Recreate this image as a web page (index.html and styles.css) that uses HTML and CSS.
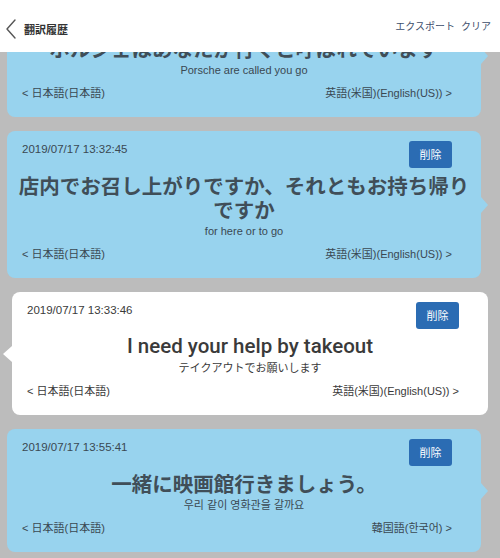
FILE: index.html
```html
<!DOCTYPE html>
<html lang="ja">
<head>
    <meta charset="UTF-8">
    <meta name="viewport" content="width=device-width, initial-scale=1.0">
    <title>翻訳履歴</title>
    <link rel="stylesheet" href="styles.css">
</head>
<body>
    <div class="header">
        <div class="back">
            <svg width="12" height="20" viewBox="0 0 12 20"><path d="M10 1 L2 10 L10 19" fill="none" stroke="#555" stroke-width="1.4" stroke-linecap="round" stroke-linejoin="round"/></svg>
            <span class="title">翻訳履歴</span>
        </div>
        <div class="actions">
            <span>エクスポート</span>
            <span>クリア</span>
        </div>
    </div>

    <div class="list">
        <!-- primera tarjeta: la parte de arriba queda bajo la cabecera -->
        <div class="card right">
            <div class="top"></div>
            <div class="main">ポルシェはあなたが行くと呼ばれています</div>
            <div class="sub">Porsche are called you go</div>
            <div class="langs">
                <span>&lt; 日本語(日本語)</span>
                <span>英語(米国)(English(US)) &gt;</span>
            </div>
        </div>

        <div class="card right">
            <div class="top">
                <span class="date">2019/07/17 13:32:45</span>
                <div class="button">削除</div>
            </div>
            <div class="main">店内でお召し上がりですか、それともお持ち帰りですか</div>
            <div class="sub">for here or to go</div>
            <div class="langs">
                <span>&lt; 日本語(日本語)</span>
                <span>英語(米国)(English(US)) &gt;</span>
            </div>
        </div>

        <div class="card left">
            <div class="top">
                <span class="date">2019/07/17 13:33:46</span>
                <div class="button">削除</div>
            </div>
            <div class="main latin">I need your help by takeout</div>
            <div class="sub">テイクアウトでお願いします</div>
            <div class="langs">
                <span>&lt; 日本語(日本語)</span>
                <span>英語(米国)(English(US)) &gt;</span>
            </div>
        </div>

        <div class="card right">
            <div class="top">
                <span class="date">2019/07/17 13:55:41</span>
                <div class="button">削除</div>
            </div>
            <div class="main">一緒に映画館行きましょう。</div>
            <div class="sub">우리 같이 영화관을 갈까요</div>
            <div class="langs">
                <span>&lt; 日本語(日本語)</span>
                <span>韓国語(한국어) &gt;</span>
            </div>
        </div>
    </div>
</body>
</html>
```

FILE: styles.css
```css
/* Página */
body {
    margin: 0;
    font-family: "Liberation Sans", "Noto Sans CJK JP", "Noto Sans CJK KR", sans-serif;
    background-color: #bcbcbc;
    overflow: hidden;
    height: 558px;
    position: relative;
}

/* Cabecera fija sobre la lista */
.header {
    position: absolute;
    top: 0;
    left: 0;
    right: 0;
    height: 52px;
    background-color: #fff;
    display: flex;
    justify-content: space-between;
    align-items: flex-start;
    z-index: 2;
}

.back {
    display: flex;
    align-items: center;
    gap: 7px;
    padding: 19px 0 0 5px;
}

.title {
    font-family: "Noto Sans CJK JP", sans-serif;
    font-size: 11px;
    font-weight: bold;
    color: #333;
}

.actions {
    display: flex;
    gap: 6px;
    padding: 18px 9px 0 0;
    font-family: "Noto Sans CJK JP", sans-serif;
    font-size: 10px;
    color: #3c4d6b;
}

/* Lista desplazada */
.list {
    margin-top: -6px;
    display: flex;
    flex-direction: column;
    gap: 14px;
}

.card {
    position: relative;
    border-radius: 8px;
    padding: 10px 0 17px;
    color: #3a4852;
}

.card.right {
    background-color: #98d3ee;
    margin: 0 19px 0 7px;
}

.card.left {
    background-color: #fff;
    margin: 0 12px;
    color: #3a3a3a;
}

/* Colitas */
.card.right::after,
.card.left::after {
    content: "";
    position: absolute;
    top: 50%;
    margin-top: -8px;
    border-top: 8px solid transparent;
    border-bottom: 8px solid transparent;
}

.card.right::after {
    right: -7px;
    border-left: 7px solid #98d3ee;
}

.card.left::after {
    left: -9px;
    border-right: 9px solid #fff;
}

.top {
    display: flex;
    justify-content: space-between;
    align-items: flex-start;
    min-height: 27px;
    padding: 0 29px 0 15px;
}

.date {
    font-size: 11.5px;
    line-height: 14px;
    margin-top: 1px;
}

.button {
    background-color: #2b6cb3;
    color: #fff;
    font-family: "Noto Sans CJK JP", sans-serif;
    font-size: 11px;
    width: 43px;
    height: 27px;
    line-height: 27px;
    text-align: center;
    border-radius: 3px;
}

.main {
    margin-top: 5px;
    padding: 0 6px;
    text-align: center;
    font-family: "Noto Sans CJK JP", sans-serif;
    font-size: 20.5px;
    line-height: 24px;
    font-weight: bold;
    color: #404e58;
}

.main.latin {
    font-family: Roboto, "Liberation Sans", sans-serif;
    font-size: 20.5px;
    font-weight: 500;
    color: #3a3a3a;
}

.sub {
    margin-top: 3px;
    text-align: center;
    font-size: 11px;
    line-height: 14px;
}

.langs {
    margin-top: 9px;
    display: flex;
    justify-content: space-between;
    padding: 0 29px 0 15px;
    font-size: 11px;
    line-height: 14px;
}
```
